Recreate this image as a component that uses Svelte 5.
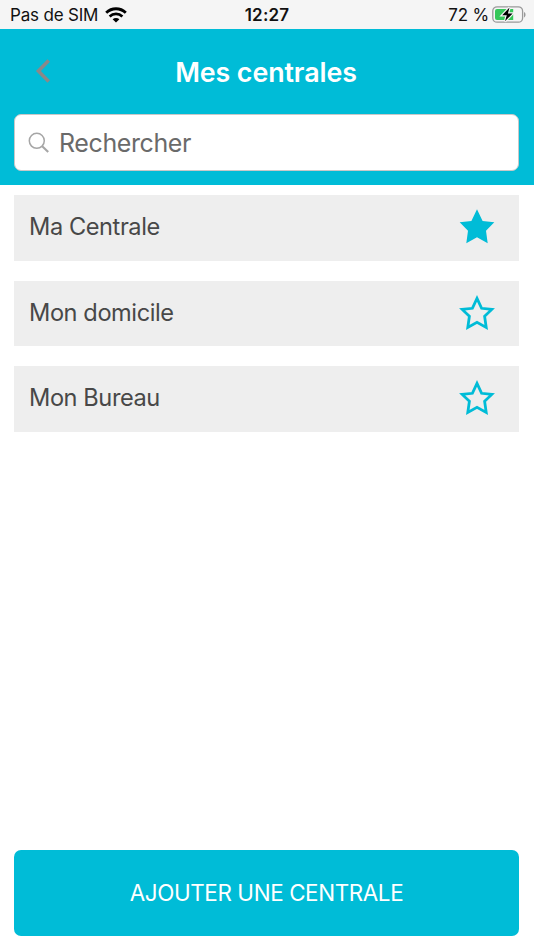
<script>
    let search = $state('');
    let centrales = $state([
        { name: 'Ma Centrale', favorite: true },
        { name: 'Mon domicile', favorite: false },
        { name: 'Mon Bureau', favorite: false }
    ]);

    const filtered = $derived(
        centrales.filter((c) => c.name.toLowerCase().includes(search.toLowerCase()))
    );

    const toggleFavorite = (centrale) => {
        centrale.favorite = !centrale.favorite;
    };
</script>

<div class="screen">
    <div class="status-bar">
        <div class="network">
            <span class="carrier">Pas de SIM</span>
            <svg width="22" height="16" viewBox="0 0 22 16">
                <path d="M1.2 5.7C6.8.5 15.2.5 20.8 5.7" fill="none" stroke="#000" stroke-width="2.9" />
                <path d="M4.6 9.4C8.3 6 13.7 6 17.4 9.4" fill="none" stroke="#000" stroke-width="2.7" />
                <path d="M11 15.6 7.6 12.3C9.5 10.6 12.5 10.6 14.4 12.3Z" />
            </svg>
        </div>
        <span class="time">12:27</span>
        <div class="battery">
            <span class="percent">72 %</span>
            <svg width="34" height="18" viewBox="0 0 34 18">
                <rect x=".8" y=".8" width="29.8" height="15.4" rx="4.3" fill="none" stroke="#999" stroke-width="1.3" />
                <path d="M32 6v5.4c2-.8 2-4.6 0-5.4Z" fill="#999" />
                <path d="M5 3H21.2V14H5a2 2 0 0 1-2-2V5a2 2 0 0 1 2-2Z" fill="#35c759" />
                <path d="M17.5 1.6 10.2 9.3h4.6l-1.8 6 7.6-7.9h-4.7Z" fill="#000" stroke="#f5f5f5" stroke-width="2.4" paint-order="stroke" />
            </svg>
        </div>
    </div>

    <header class="header">
        <div class="title-bar">
            <button class="back" aria-label="Retour">
                <svg width="16" height="26" viewBox="0 0 16 26">
                    <path d="M13.7 2.6 3.4 13 13.7 23.4" fill="none" stroke="#8b8888" stroke-width="3.5" />
                </svg>
            </button>
            <h1>Mes centrales</h1>
        </div>
        <label class="search">
            <svg width="22" height="22" viewBox="0 0 22 22" fill="none" stroke="#a6a6a6">
                <circle cx="8.8" cy="8.8" r="7.5" stroke-width="1.5" />
                <path d="m14.2 14.2 6 5.8" stroke-width="2.1" />
            </svg>
            <input type="text" placeholder="Rechercher" bind:value={search} />
        </label>
    </header>

    <div class="list">
        {#each filtered as centrale}
            <div class="row">
                <span class="name">{centrale.name}</span>
                <button class="star" aria-label="Favori" onclick={() => toggleFavorite(centrale)}>
                    <svg width="36" height="36" viewBox="0 0 36 36">
                        {#if centrale.favorite}
                            <path d="M18 .3 23.6 12 35.3 13.3 27 21.7 28.7 34.3 18 28.3 7.3 34.3 9 21.7.7 13.3 12.4 12Z" fill="#00bcd7" />
                        {:else}
                            <path d="M18 3.4 22.6 13.3 32.8 14.4 25.6 21.3 27.2 32.4 18 27.3 8.8 32.4 10.4 21.3 3.2 14.4 13.4 13.3Z" fill="none" stroke="#00bcd7" stroke-width="2.8" />
                        {/if}
                    </svg>
                </button>
            </div>
        {/each}
    </div>

    <button class="add">AJOUTER UNE CENTRALE</button>
</div>

<style>
    :global(body) {
        background: #fff;
    }

    .screen {
        display: flex;
        flex-direction: column;
        box-sizing: border-box;
        height: 950px;
        padding-bottom: 14.5px;
        font-family: Inter, "Liberation Sans", sans-serif;
    }

    button {
        border: none;
        padding: 0;
        background: none;
        font-family: inherit;
        cursor: pointer;
    }

    svg {
        display: block;
        flex-shrink: 0;
    }

    .status-bar {
        display: grid;
        grid-template-columns: 1fr auto 1fr;
        align-items: center;
        box-sizing: border-box;
        height: 28.5px;
        padding: 1px 8px 0 10px;
        background: #f5f5f5;
        color: #111;
        font-size: 17px;
        line-height: 20px;
        letter-spacing: -0.18px;
    }

    .network,
    .battery {
        display: flex;
        align-items: center;
    }

    .network {
        gap: 6.5px;
    }

    .battery {
        justify-content: flex-end;
        gap: 3px;
    }

    .time {
        margin-right: 2px;
        font-weight: 600;
        letter-spacing: 0.2px;
    }

    .header {
        box-sizing: border-box;
        height: 156.5px;
        padding: 0 15px 0 14px;
        background: #00bcd7;
    }

    .title-bar {
        display: grid;
        grid-template-columns: 60px 1fr 60px;
        align-items: center;
        height: 85.5px;
    }

    .back {
        justify-self: start;
        margin-left: 20.5px;
    }

    h1 {
        margin: 2px 1px 0 0;
        color: #fff;
        font-size: 26.8px;
        font-weight: 600;
        line-height: 32px;
        letter-spacing: -0.08px;
        text-align: center;
    }

    .search {
        display: flex;
        align-items: center;
        gap: 9px;
        box-sizing: border-box;
        height: 57px;
        padding: 0 13px;
        border: 1.5px solid #c8c8c8;
        border-radius: 7px;
        background: #fff;
    }

    input {
        flex: 1;
        min-width: 0;
        padding: 0;
        border: none;
        outline: none;
        background: none;
        color: #666;
        font-family: inherit;
        font-size: 25px;
        line-height: 32px;
        letter-spacing: -0.4px;
    }

    input::placeholder {
        color: #6a6a6a;
        opacity: 1;
    }

    .list {
        display: flex;
        flex: 1;
        flex-direction: column;
        gap: 20px;
        padding: 10.4px 15px 0 14px;
    }

    .row {
        display: flex;
        align-items: center;
        justify-content: space-between;
        box-sizing: border-box;
        height: 65.4px;
        padding: 0 24px 1.6px 15px;
        background: #eee;
    }

    .name {
        color: #484848;
        font-size: 23.6px;
        line-height: 32px;
        letter-spacing: -0.42px;
    }

    .add {
        height: 85.5px;
        margin: 0 15px 0 14px;
        border-radius: 7px;
        background: #00bcd7;
        color: #fff;
        font-size: 22.4px;
        letter-spacing: -0.38px;
    }
</style>
